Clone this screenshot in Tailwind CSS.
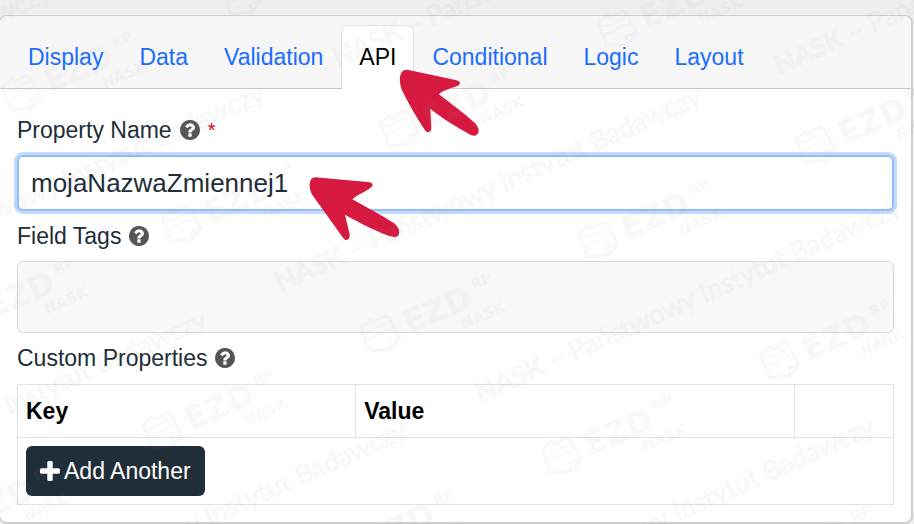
<!DOCTYPE html>
<html lang="en">
<head>
    <meta charset="UTF-8">
    <meta name="viewport" content="width=device-width, initial-scale=1.0">
    <title>Component settings - API</title>
    <script src="https://cdn.jsdelivr.net/npm/@tailwindcss/browser@4"></script>
</head>
<body class="relative overflow-x-hidden bg-[#efefef] font-['Liberation_Sans',Arial,sans-serif] text-[23px] text-[#212d38]">

    <!-- Shared icons -->
    <svg class="hidden">
        <symbol id="icon-help" viewBox="128 128 1536 1536">
            <path fill="currentColor" d="M1024 1376v-192q0-14-9-23t-23-9h-192q-14 0-23 9t-9 23v192q0 14 9 23t23 9h192q14 0 23-9t9-23zm256-672q0-88-55.500-163t-138.500-116-170-41q-243 0-371 213-15 24 8 42l132 100q7 6 19 6 16 0 25-12 53-68 86-92 34-24 86-24 48 0 85.500 26t37.500 59q0 38-20 61t-68 45q-63 28-115.500 86.500t-52.500 125.500v36q0 14 9 23t23 9h192q14 0 23-9t9-23q0-19 21.500-49.500t54.500-49.500q32-18 49-28.500t46-35 44.500-48 28-60.500 12.500-81zm384 192q0 209-103 385.500t-279.500 279.500-385.500 103-385.500-103-279.500-279.500-103-385.500 103-385.500 279.500-279.500 385.500-103 385.500 103 279.500 279.500 103 385.500z"/>
        </symbol>
    </svg>

    <main class="pt-[15px] pr-px">
        <section class="-ml-px rounded-lg border border-r-2 border-b-2 border-[#cfcfcf] bg-white">

            <header class="rounded-t-lg border-b border-[#c8c8c8] bg-[#f7f7f7] px-[10px] pt-[9px]">
                <nav>
                    <ul class="flex">
                        <li><a href="#display" class="block px-[18px] pt-4 pb-[15px] leading-8 text-[#1a6dff]">Display</a></li>
                        <li><a href="#data" class="block px-[18px] pt-4 pb-[15px] leading-8 text-[#1a6dff]">Data</a></li>
                        <li><a href="#validation" class="block px-[18px] pt-4 pb-[15px] leading-8 text-[#1a6dff]">Validation</a></li>
                        <li class="relative -mb-px">
                            <a href="#api" aria-current="page" class="block rounded-t-md border border-b-0 border-[#dee2e6] bg-white px-[17px] pt-[15px] pb-4 leading-8 text-black">API</a>
                            <svg class="absolute top-[35px] left-[49px] z-10 h-20 w-[100px]" viewBox="0 0 300 240" aria-hidden="true">
                                <path fill="#d6193f" d="M52 29L193 59C213 63 215 73 200 79C184 85 159 91 147 103C182 131 224 160 255 190C276 211 264 235 242 225C199 199 154 174 121 146L124 203C124 219 111 220 104 209C80 172 57 133 38 95C25 65 26 27 52 29Z"/>
                            </svg>
                        </li>
                        <li><a href="#conditional" class="block px-[18px] pt-4 pb-[15px] leading-8 text-[#1a6dff]">Conditional</a></li>
                        <li><a href="#logic" class="block px-[18px] pt-4 pb-[15px] leading-8 text-[#1a6dff]">Logic</a></li>
                        <li><a href="#layout" class="block px-[18px] pt-4 pb-[15px] leading-8 text-[#1a6dff]">Layout</a></li>
                    </ul>
                </nav>
            </header>

            <form class="px-[17px] pt-6 pb-[17px]">
                <label for="property-name" class="mb-2 flex items-center gap-2 leading-[34px]">
                    Property Name
                    <svg class="size-5 text-[#555]" aria-hidden="true"><use href="#icon-help"/></svg>
                    <span class="text-[20px] text-red-600">*</span>
                </label>
                <div class="relative mb-2">
                    <input id="property-name" type="text" value="mojaNazwaZmiennej1" class="block h-14 w-full rounded-md border-2 border-[#93bdfb] bg-white px-3 text-[26px] ring-3 ring-[#c2dbfe] outline-none">
                    <svg class="absolute top-[15px] left-[283px] h-[75px] w-[110px]" viewBox="0 0 330 225" aria-hidden="true">
                        <path fill="#d6193f" d="M46 22L203 36C222 38 222 47 208 56C192 67 168 76 157 88C200 113 242 134 280 158C304 175 302 201 284 201C260 199 190 165 135 134L149 193C151 211 137 215 129 203L37 75C24 52 27 21 46 22Z"/>
                    </svg>
                </div>

                <label for="field-tags" class="mb-2 flex items-center gap-2 leading-[34px]">
                    Field Tags
                    <svg class="size-5 text-[#555]" aria-hidden="true"><use href="#icon-help"/></svg>
                </label>
                <input id="field-tags" type="text" class="mb-2 block h-[72px] w-full rounded-md border border-[#d8d8d8] bg-[#f8f8f8] px-3 outline-none">

                <h2 id="custom-properties" class="mb-[9px] flex items-center gap-2 leading-[34px]">
                    Custom Properties
                    <svg class="size-5 text-[#555]" aria-hidden="true"><use href="#icon-help"/></svg>
                </h2>
                <table aria-labelledby="custom-properties" class="w-full table-fixed border-collapse border border-[#dee2e6] text-left">
                    <thead>
                        <tr class="text-black">
                            <th class="w-[38.6%] border border-[#dee2e6] px-2 py-[10px] leading-8">Key</th>
                            <th class="w-[50.1%] border border-[#dee2e6] px-2 py-[10px] leading-8">Value</th>
                            <td class="border border-[#dee2e6]"></td>
                        </tr>
                    </thead>
                    <tbody>
                        <tr>
                            <td colspan="3" class="p-2">
                                <button type="button" class="flex h-[50px] items-center gap-1 rounded-md bg-[#212d38] px-[14px] text-white">
                                    <svg class="size-5" viewBox="192 128 1408 1408" aria-hidden="true">
                                        <path fill="currentColor" d="M1600 736v192q0 40-28 68t-68 28h-416v416q0 40-28 68t-68 28h-192q-40 0-68-28t-28-68v-416h-416q-40 0-68-28t-28-68v-192q0-40 28-68t68-28h416v-416q0-40 28-68t68-28h192q40 0 68 28t28 68v416h416q40 0 68 28t28 68z"/>
                                    </svg>
                                    Add Another
                                </button>
                            </td>
                        </tr>
                    </tbody>
                </table>
            </form>
        </section>
    </main>

    <!-- Watermark -->
    <svg class="pointer-events-none absolute inset-0 z-20 size-full overflow-hidden text-[#999] opacity-6" aria-hidden="true">
        <defs>
            <g id="logo">
                <g fill="none" stroke="currentColor" stroke-width="3" stroke-linejoin="round">
                    <path d="M-19-5L-9-14L-7-10L5-17L9-15L20 5L11 16L-10 18Z"/>
                    <path d="M20 5L9 8L11 16"/>
                    <path stroke-width="2" d="M-18 1C-13-4-11-1-7-3S-2-8 8-9"/>
                    <path stroke-width="2" d="M-14 8C-9 3-7 6-3 3S3-3 11-3"/>
                </g>
                <g transform="rotate(-24)" fill="currentColor" font-family="DejaVu Sans, sans-serif" font-weight="bold">
                    <text x="26" y="13" font-size="32">EZD</text>
                    <text x="103" y="-2" font-size="14">RP</text>
                    <text x="78" y="31" font-size="15">NASK</text>
                </g>
            </g>
            <text id="institute" transform="rotate(-24)" fill="currentColor" stroke="currentColor" font-family="Lato, sans-serif" font-size="27"><tspan font-weight="bold">NASK</tspan> – Państwowy Instytut Badawczy</text>
        </defs>

        <use href="#logo" x="21" y="92"/>
        <use href="#logo" x="241" y="-4"/>
        <use href="#logo" x="-37" y="318"/>
        <use href="#logo" x="181" y="223"/>
        <use href="#logo" x="399" y="128"/>
        <use href="#logo" x="617" y="28"/>
        <use href="#logo" x="-57" y="525"/>
        <use href="#logo" x="162" y="430"/>
        <use href="#logo" x="380" y="333"/>
        <use href="#logo" x="598" y="239"/>
        <use href="#logo" x="815" y="144"/>
        <use href="#logo" x="343" y="550"/>
        <use href="#logo" x="561" y="455"/>
        <use href="#logo" x="779" y="360"/>
        <use href="#logo" x="760" y="566"/>

        <use href="#institute" x="-370" y="188"/>
        <use href="#institute" x="-157" y="289"/>
        <use href="#institute" x="-215" y="515"/>
        <use href="#institute" x="-15" y="626"/>
        <use href="#institute" x="338" y="68"/>
        <use href="#institute" x="280" y="292"/>
        <use href="#institute" x="480" y="403"/>
        <use href="#institute" x="453" y="622"/>
        <use href="#institute" x="779" y="75"/>
    </svg>

</body>
</html>
